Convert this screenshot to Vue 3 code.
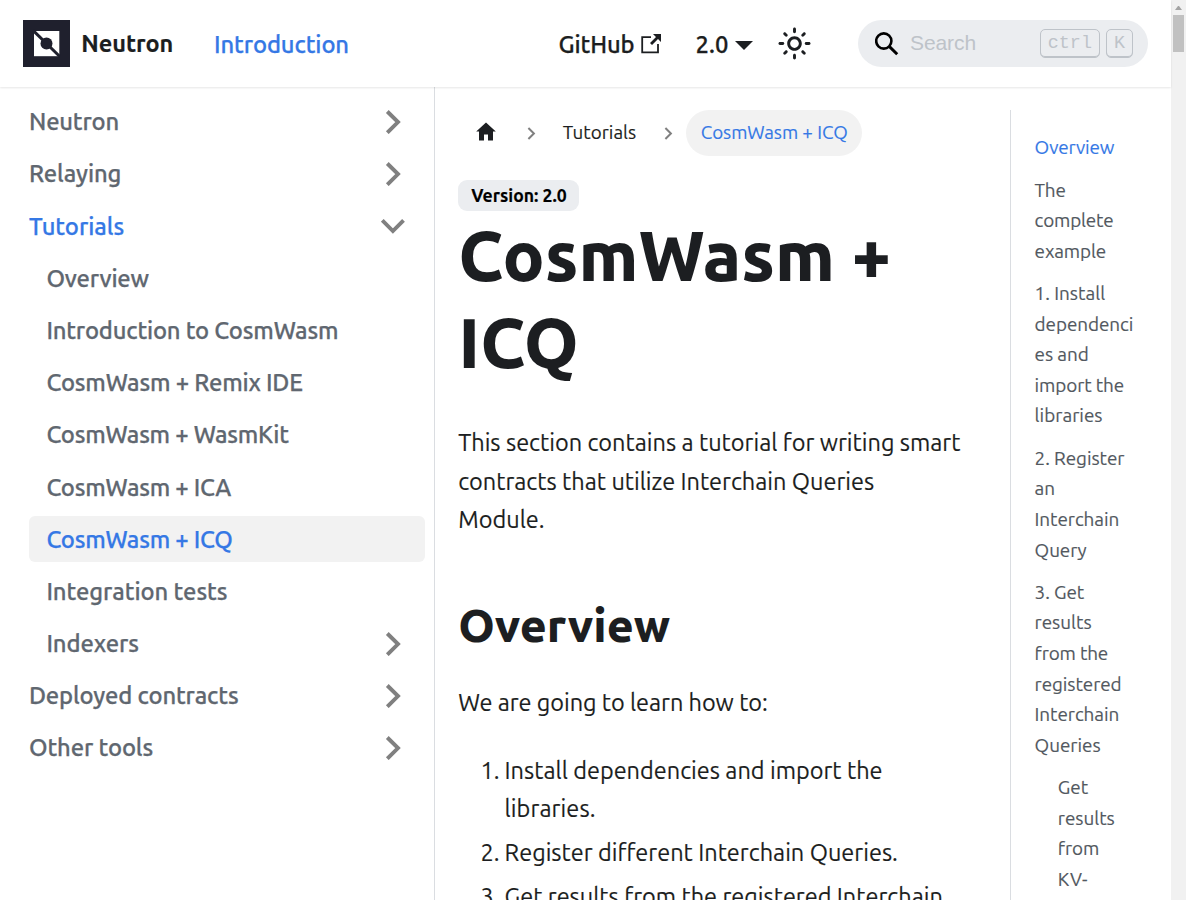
<script setup>
// Spreads the letters of a label so that it takes the given advance width.
const vFit = {
  mounted(el, { value }) {
    if (!value) return
    const natural = el.getBoundingClientRect().width
    const count = el.textContent.length
    el.style.letterSpacing = `${(value - natural) / count}px`
  },
}

const menu = [
  { text: 'Neutron', w: 90, arrow: 'right' },
  { text: 'Relaying', w: 92.3, arrow: 'right' },
  { text: 'Tutorials', w: 95.1, arrow: 'down', active: true },
  { text: 'Overview', w: 102.5, sub: true },
  { text: 'Introduction to CosmWasm', w: 292, sub: true },
  { text: 'CosmWasm + Remix IDE', w: 256.3, sub: true },
  { text: 'CosmWasm + WasmKit', w: 242.3, sub: true },
  { text: 'CosmWasm + ICA', w: 184.7, sub: true },
  { text: 'CosmWasm + ICQ', w: 186.2, sub: true, active: true, current: true },
  { text: 'Integration tests', w: 181, sub: true },
  { text: 'Indexers', w: 92.5, sub: true, arrow: 'right' },
  { text: 'Deployed contracts', w: 209.5, arrow: 'right' },
  { text: 'Other tools', w: 124, arrow: 'right' },
]

const steps = [
  [['Install dependencies and import the', 378], ['libraries.', 91]],
  [['Register different Interchain Queries.', 393.3]],
  [['Get results from the registered Interchain', 438.3]],
]

const toc = [
  { lines: [['Overview', 79.8]], active: true },
  { lines: [['The', 31], ['complete', 79], ['example', 71.5]] },
  { lines: [['1. Install', 70.5], ['dependenci', 98.6], ['es and', 54], ['import the', 89.5], ['libraries', 68]] },
  { lines: [['2. Register', 89.8], ['an', 20.5], ['Interchain', 84.7], ['Query', 52]] },
  { lines: [['3. Get', 49.5], ['results', 57], ['from the', 73.5], ['registered', 87], ['Interchain', 84.7], ['Queries', 66]] },
  { lines: [['Get', 30.5], ['results', 57], ['from', 41.5], ['KV-', 30]], sub: true },
]
</script>

<template>
  <div class="window">
    <div class="page">
      <header class="navbar">
        <svg class="logo" viewBox="0 0 47 47">
          <rect width="47" height="47" fill="#1f202d" />
          <rect x="11" y="11" width="25.3" height="25.2" fill="#fff" />
          <path d="M10 10.4L37 36.8" stroke="#1f202d" stroke-width="3" />
          <circle cx="23.5" cy="23.5" r="6" fill="#1f202d" />
        </svg>
        <b class="brand"><span v-fit="92">Neutron</span></b>
        <a class="nav-link active"><span v-fit="135">Introduction</span></a>
        <a class="nav-link github">
          <span v-fit="76">GitHub</span>
          <svg width="20" height="20" viewBox="0 0 20 20">
            <path d="M10 3.2H1.2V18.4H17V10" fill="none" stroke="#1c1e21" stroke-width="1.8" />
            <path d="M12 0H20V8L17 5L11 11L9 9L15 3Z" fill="#1c1e21" />
          </svg>
        </a>
        <a class="nav-link version"><span v-fit="33">2.0</span><i class="caret"></i></a>
        <svg class="sun" width="35" height="35" viewBox="0 0 24 24">
          <path fill="#1c1e21" d="M12,9c1.65,0,3,1.35,3,3s-1.35,3-3,3s-3-1.35-3-3S10.35,9,12,9 M12,7c-2.76,0-5,2.24-5,5s2.24,5,5,5s5-2.24,5-5 S14.76,7,12,7L12,7z M2,13l2,0c0.55,0,1-0.45,1-1s-0.45-1-1-1l-2,0c-0.55,0-1,0.45-1,1S1.45,13,2,13z M20,13l2,0c0.55,0,1-0.45,1-1 s-0.45-1-1-1l-2,0c-0.55,0-1,0.45-1,1S19.45,13,20,13z M11,2v2c0,0.55,0.45,1,1,1s1-0.45,1-1V2c0-0.55-0.45-1-1-1S11,1.45,11,2z M11,20v2c0,0.55,0.45,1,1,1s1-0.45,1-1v-2c0-0.55-0.45-1-1-1C11.45,19,11,19.45,11,20z M5.99,4.58c-0.39-0.39-1.03-0.39-1.41,0 c-0.39,0.39-0.39,1.03,0,1.41l1.06,1.06c0.39,0.39,1.03,0.39,1.41,0s0.39-1.03,0-1.41L5.99,4.58z M18.36,16.95 c-0.39-0.39-1.03-0.39-1.41,0c-0.39,0.39-0.39,1.03,0,1.41l1.06,1.06c0.39,0.39,1.03,0.39,1.41,0c0.39-0.39,0.39-1.03,0-1.41 L18.36,16.95z M19.42,5.99c0.39-0.39,0.39-1.03,0-1.41c-0.39-0.39-1.03-0.39-1.41,0l-1.06,1.06c-0.39,0.39-0.39,1.03,0,1.41 s1.03,0.39,1.41,0L19.42,5.99z M7.05,18.36c0.39-0.39,0.39-1.03,0-1.41c-0.39-0.39-1.03-0.39-1.41,0l-1.06,1.06 c-0.39,0.39-0.39,1.03,0,1.41s1.03,0.39,1.41,0L7.05,18.36z" />
        </svg>
        <div class="search">
          <svg width="24" height="24" viewBox="0 0 24 24" fill="none" stroke="#000">
            <circle cx="8.8" cy="9" r="7.6" stroke-width="2.6" />
            <path d="M14.2 14.4L22.2 22.2" stroke-width="3" />
          </svg>
          <span class="placeholder" v-fit="66">Search</span>
          <kbd>ctrl</kbd><kbd>K</kbd>
        </div>
      </header>

      <div class="body">
        <nav class="sidebar">
          <a
            v-for="item in menu"
            :key="item.text"
            class="item"
            :class="{ sub: item.sub, active: item.active, current: item.current }"
          >
            <span v-fit="item.w">{{ item.text }}</span>
            <svg v-if="item.arrow" :class="item.arrow" width="24" height="24" viewBox="0 0 24 24">
              <path d="M6.3 1.5L17 12.1L6.3 22.7" fill="none" stroke="#808080" stroke-width="3.9" />
            </svg>
          </a>
        </nav>

        <main class="content">
          <div class="crumbs">
            <svg class="home" width="20" height="19" viewBox="0 0 20 19">
              <path d="M10 0.4L19.8 9.4H17V18.4H12V12.6H8V18.4H3V9.4H0.2Z" fill="#1c1e21" />
            </svg>
            <svg class="sep" width="9" height="13" viewBox="0 0 9 13"><path d="M1.4 1L6.9 6.5L1.4 12" /></svg>
            <span class="crumb"><span v-fit="73.5">Tutorials</span></span>
            <svg class="sep second" width="9" height="13" viewBox="0 0 9 13"><path d="M1.4 1L6.9 6.5L1.4 12" /></svg>
            <span class="crumb pill"><span v-fit="147">CosmWasm + ICQ</span></span>
          </div>
          <div class="badge"><span v-fit="95.5">Version: 2.0</span></div>
          <h1><span v-fit="433">CosmWasm +</span><br /><span v-fit="120.5">ICQ</span></h1>
          <p>
            <span v-fit="502.3">This section contains a tutorial for writing smart</span><br />
            <span v-fit="416">contracts that utilize Interchain Queries</span><br />
            <span v-fit="86.5">Module.</span>
          </p>
          <h2><span v-fit="212">Overview</span></h2>
          <p><span v-fit="309.5">We are going to learn how to:</span></p>
          <ol>
            <li v-for="(step, i) in steps" :key="i">
              <span class="num">{{ i + 1 }}.</span>
              <div><div v-for="line in step" :key="line[0]"><span v-fit="line[1]">{{ line[0] }}</span></div></div>
            </li>
          </ol>
        </main>

        <aside class="toc">
          <div v-for="(entry, i) in toc" :key="i" class="entry" :class="{ active: entry.active, sub: entry.sub }">
            <div v-for="line in entry.lines" :key="line[0]"><span v-fit="line[1]">{{ line[0] }}</span></div>
          </div>
        </aside>
      </div>
    </div>
    <div class="scrollbar"><i class="up"></i><i class="thumb"></i></div>
  </div>
</template>

<style>
html,
body {
  margin: 0;
  overflow: hidden;
}
</style>

<style scoped>
* {
  box-sizing: border-box;
}
.window {
  display: flex;
  width: 1186px;
  height: 900px;
  overflow: hidden;
  background: #fff;
  color: #1c1e21;
  font: 23.5px/38.28px Ubuntu, 'Open Sans', 'Noto Sans', sans-serif;
  white-space: nowrap;
  -webkit-text-stroke: 0.15px currentColor;
}
.page {
  width: 1171px;
  height: 900px;
}
.navbar {
  position: relative;
  display: flex;
  align-items: center;
  height: 87px;
  padding: 0 23px;
  box-shadow: 0 1px 2px rgba(0, 0, 0, 0.1);
}
.logo {
  width: 47px;
  height: 47px;
}
.brand {
  width: 132.5px;
  padding-left: 11.3px;
  font-weight: 700;
}
.nav-link {
  display: flex;
  align-items: center;
  font-size: 23.8px;
  font-weight: 500;
  line-height: 40px;
  -webkit-text-stroke-width: 0.25px;
}
.nav-link span {
  padding-top: 1px;
}
.active {
  color: #3578e5;
}
.nav-link.active {
  margin-left: 11.5px;
}
.github {
  margin-left: auto;
}
.github svg {
  margin-left: 6.5px;
}
.version {
  margin-left: 34.5px;
}
.caret {
  margin: 4px 0 0 6.5px;
  border: 9px solid transparent;
  border-top-color: #1c1e21;
  border-bottom: 0;
}
.sun {
  margin: 0 0 0 24px;
}
.search {
  display: flex;
  align-items: center;
  width: 290px;
  height: 47px;
  margin-left: 46px;
  padding: 0 15px 0 17px;
  border-radius: 24px;
  background: #ebedf0;
  color: #bec3c9;
  -webkit-text-stroke-width: 0;
}
.placeholder {
  margin: 0 auto 0 11px;
  font: 21px/44px 'Liberation Sans', sans-serif;
  padding-bottom: 1px;
}
kbd {
  height: 29px;
  margin-left: 6px;
  padding: 0 7px;
  border: 1px solid #bec3c9;
  border-radius: 5px;
  box-shadow: inset 0 -1px 0 #bec3c9;
  font: 18.4px/27px 'Liberation Mono', monospace;
}
.body {
  display: flex;
  height: 813px;
  overflow: hidden;
}
.sidebar {
  width: 435px;
  padding: 11.5px 9px 0 11.6px;
  border-right: 1px solid #dadde1;
  color: #606770;
  font-size: 23.8px;
  font-weight: 500;
  line-height: 29px;
  -webkit-text-stroke-width: 0.25px;
}
.item {
  display: flex;
  align-items: center;
  justify-content: space-between;
  height: 46.4px;
  margin-bottom: 5.8px;
  padding: 0 20px 0 17.4px;
}
.item.sub {
  margin-left: 17.4px;
}
.item.active {
  color: #3578e5;
}
.item.active span {
  padding-top: 0.8px;
}
.item.current {
  border-radius: 6px;
  background: #f2f2f2;
}
.down {
  transform: rotate(90deg);
}
.content {
  width: 575px;
  padding: 23px 23.2px 0;
}
.crumbs {
  display: flex;
  align-items: center;
  height: 46px;
  font-size: 18.8px;
}
.crumb > span {
  display: block;
  margin-top: -1px;
}
.home {
  margin: -4px 0 0 17.5px;
}
.sep {
  margin: 0 27px 0 31px;
  fill: none;
  stroke: #808080;
  stroke-width: 2;
}
.sep.second {
  margin: 0 12.5px 0 28px;
}
.pill {
  height: 46px;
  padding: 0 14px 0 15px;
  border-radius: 23px;
  background: #f2f2f2;
  color: #3578e5;
  line-height: 46px;
}
.badge {
  width: 121px;
  height: 31px;
  margin-top: 24px;
  padding-left: 13px;
  border-radius: 9px;
  background: #ebedf0;
  color: #000;
  font-size: 17.6px;
  font-weight: 700;
  line-height: 31px;
}
h1 {
  margin: 0.8px 0 37.5px;
  font-size: 69.6px;
  font-weight: 800;
  line-height: 87px;
  -webkit-text-stroke-width: 0;
}
p {
  margin: 0 0 29px;
}
h2 {
  margin: 58.2px 0 29px;
  font-size: 46.4px;
  font-weight: 800;
  line-height: 58px;
  -webkit-text-stroke-width: 0;
}
ol {
  margin: 0;
  padding: 0;
  list-style: none;
}
li {
  display: flex;
  margin-bottom: 5.6px;
}
.num {
  width: 46.4px;
  padding-right: 5px;
  text-align: right;
}
.toc {
  width: 161px;
  margin-top: 23px;
  padding: 22.3px 0 0 23.6px;
  border-left: 1px solid #dadde1;
  color: #525860;
  font-size: 18.9px;
  line-height: 30.62px;
}
.entry {
  margin-bottom: 11.6px;
}
.entry.active {
  color: #3578e5;
}
.entry.sub {
  margin-left: 23.2px;
}
.scrollbar {
  width: 15px;
  background: #f1f1f1;
}
.up {
  display: block;
  width: 7px;
  margin: 6px 0 5px 4px;
  border: 3.5px solid transparent;
  border-top: 0;
  border-bottom: 4px solid #a3a3a3;
}
.thumb {
  display: block;
  width: 11px;
  height: 37px;
  margin-left: 2px;
  background: #c1c1c1;
}
</style>
